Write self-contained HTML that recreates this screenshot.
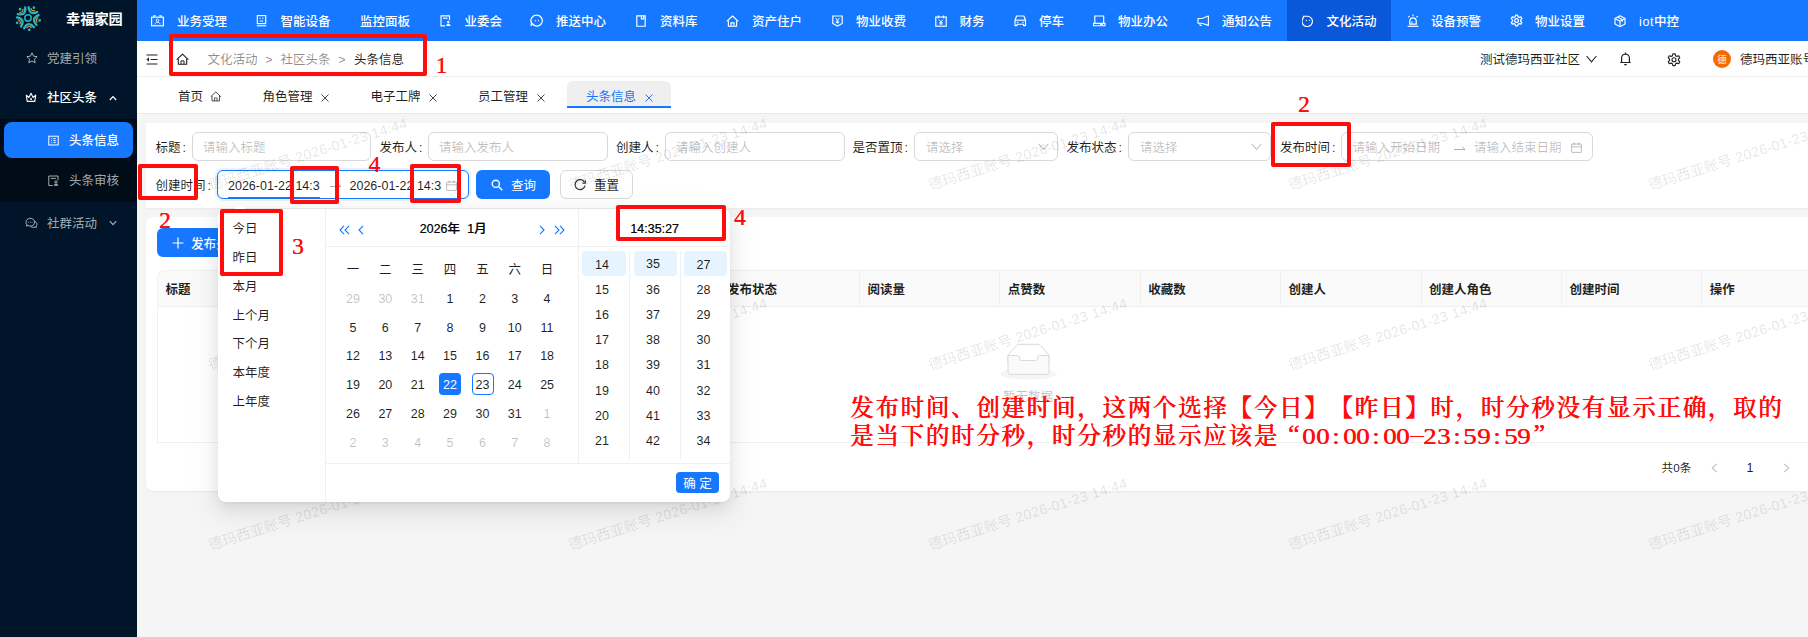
<!DOCTYPE html>
<html lang="zh-CN"><head><meta charset="utf-8"><title>头条信息</title><style>
html,body{margin:0;padding:0}
body{width:1808px;height:637px;overflow:hidden;position:relative;background:#f5f5f5;font-family:"Liberation Sans","Noto Sans CJK SC",sans-serif;font-size:12.5px;color:rgba(0,0,0,.88)}
.b{position:absolute;box-sizing:border-box}
.t{position:absolute;height:20px;line-height:20px;white-space:nowrap}
.c{text-align:center}
.wm{position:absolute;white-space:nowrap;font-size:14.2px;color:rgba(0,0,0,.115);letter-spacing:.28px;transform:rotate(-17.6deg);transform-origin:0 0;height:20px;line-height:20px;pointer-events:none}
.hw{display:inline-block;width:13.420px;text-align:center;letter-spacing:0;font-weight:400;font-size:24px;transform:scaleX(1.12);text-shadow:.45px 0 0 #ff0d0d}
.hy{transform:scale(2.1,.5)}
.ql,.qr{display:inline-block;width:23.600px;letter-spacing:0;font-size:26px;font-weight:400;text-shadow:.45px 0 0 #ff0d0d}
.ql,.qr{position:relative;top:-2px;box-sizing:border-box}
.ql{text-align:right;padding-right:3px}
.qr{text-align:left;padding-left:3px}
.red{color:#ff0d0d;font-family:"Liberation Serif","Noto Serif CJK SC",serif;font-weight:700}
</style></head><body>
<div class="b" style="left:137px;top:0px;width:1671px;height:41px;background:#1677ff"></div>
<div class="b" style="left:137px;top:41px;width:1671px;height:36px;background:#fff;border-bottom:1px solid #f0f0f0"></div>
<div class="b" style="left:137px;top:77px;width:1671px;height:37px;background:#fff;border-bottom:1px solid #e8e8e8"></div>
<div class="b" style="left:146px;top:123px;width:1684px;height:85px;background:#fff;border-radius:0;box-shadow:0 1px 2px rgba(0,0,0,.05)"></div>
<div class="b" style="left:146px;top:217px;width:1684px;height:274px;background:#fff;border-radius:7px;box-shadow:0 1px 2px rgba(0,0,0,.05)"></div>
<div class="b" style="left:0px;top:0px;width:137px;height:637px;background:#001529"></div>
<div class="b" style="left:0px;top:119px;width:137px;height:83px;background:#000c17"></div>
<div class="b" style="left:4px;top:122px;width:129px;height:35.5px;background:#1677ff;border-radius:8px"></div>
<svg class="b" style="left:14.9px;top:5.3px;" width="26" height="26" viewBox="0 0 26 26"><path d="M23.63 10.15 Q15.54 13.54 21.55 19.92" fill="none" stroke="#2bb3bf" stroke-width="2.25" stroke-linecap="round"/><path d="M23.00 12.83 Q20.24 14.54 22.06 17.23" fill="none" stroke="#e9a825" stroke-width="1.1" stroke-linecap="round"/><circle cx="24.64" cy="15.47" r="1.35" fill="#2bb3bf"/><path d="M18.99 22.23 Q13.27 15.59 9.06 23.27" fill="none" stroke="#2bb3bf" stroke-width="2.25" stroke-linecap="round"/><path d="M16.26 22.46 Q13.77 20.36 11.78 22.93" fill="none" stroke="#e9a825" stroke-width="1.1" stroke-linecap="round"/><circle cx="14.24" cy="24.83" r="1.35" fill="#2bb3bf"/><path d="M6.08 21.55 Q10.62 14.06 2.02 12.42" fill="none" stroke="#2bb3bf" stroke-width="2.25" stroke-linecap="round"/><path d="M5.01 19.02 Q6.24 16.01 3.18 14.91" fill="none" stroke="#e9a825" stroke-width="1.1" stroke-linecap="round"/><circle cx="2.13" cy="17.84" r="1.35" fill="#2bb3bf"/><path d="M2.73 9.06 Q11.26 11.07 10.15 2.37" fill="none" stroke="#2bb3bf" stroke-width="2.25" stroke-linecap="round"/><path d="M4.81 7.26 Q8.05 7.50 8.15 4.25" fill="none" stroke="#e9a825" stroke-width="1.1" stroke-linecap="round"/><circle cx="5.04" cy="4.16" r="1.35" fill="#2bb3bf"/><path d="M13.58 2.02 Q14.30 10.75 22.23 7.01" fill="none" stroke="#2bb3bf" stroke-width="2.25" stroke-linecap="round"/><path d="M15.92 3.44 Q16.70 6.59 19.82 5.69" fill="none" stroke="#e9a825" stroke-width="1.1" stroke-linecap="round"/><circle cx="18.95" cy="2.69" r="1.35" fill="#2bb3bf"/><circle cx="13" cy="13" r="3.2" fill="none" stroke="#2bb3bf" stroke-width="1.5"/></svg>
<div class="t" style="left:66px;top:9px;font-size:14.2px;color:#fff;font-weight:700;">幸福家园</div>
<svg class="b" style="left:25.5px;top:52px;" width="12" height="12" viewBox="0 0 12 12"><path d="M6 .9l1.55 3.3 3.55.45-2.6 2.5.65 3.6L6 9l-3.15 1.75.65-3.6L.9 4.65l3.55-.45z" fill="none" stroke="rgba(255,255,255,.65)" stroke-width="1" stroke-linejoin="round"/></svg>
<div class="t" style="left:47px;top:49px;font-size:12.5px;color:rgba(255,255,255,.65);font-weight:400;">党建引领</div>
<svg class="b" style="left:25px;top:91px;" width="12" height="12" viewBox="0 0 12 12"><path d="M1.3 4.2l2.6 2.3L6 2.2l2.1 4.3 2.6-2.3-.9 6.2H2.2z" fill="none" stroke="#fff" stroke-width="1.1" stroke-linejoin="round"/><circle cx="6" cy="8" r="1" fill="#fff"/></svg>
<div class="t" style="left:47px;top:88px;font-size:12.5px;color:#fff;font-weight:500;">社区头条</div>
<svg class="b" style="left:108.5px;top:94.5px;" width="8" height="6" viewBox="0 0 8 6"><path d="M.8 5L4 1.6 7.2 5" fill="none" stroke="#fff" stroke-width="1.2"/></svg>
<svg class="b" style="left:48px;top:134.5px;" width="11" height="11" viewBox="0 0 11 11"><rect x=".8" y="1.2" width="9.4" height="8.8" fill="none" stroke="#fff" stroke-width="1"/><path d="M3.2 3.6h1M3.2 5.6h1M3.2 7.6h1M5.3 3.6h2.5M5.3 5.6h2.5M5.3 7.6h2.5" stroke="#fff" stroke-width=".9"/></svg>
<div class="t" style="left:69px;top:131px;font-size:12.5px;color:#fff;font-weight:500;">头条信息</div>
<svg class="b" style="left:48px;top:174.5px;" width="11" height="11" viewBox="0 0 11 11"><path d="M10 5.2V1H.8v9.6h4" fill="none" stroke="rgba(255,255,255,.65)" stroke-width="1"/><path d="M2.8 3.4h5" stroke="rgba(255,255,255,.65)" stroke-width="1"/><circle cx="8" cy="7" r="1.2" fill="none" stroke="rgba(255,255,255,.65)" stroke-width=".9"/><path d="M5.8 10.8c.2-1.6 1.2-2 2.2-2s2 .4 2.2 2z" fill="rgba(255,255,255,.65)"/></svg>
<div class="t" style="left:69px;top:171px;font-size:12.5px;color:rgba(255,255,255,.65);font-weight:400;">头条审核</div>
<svg class="b" style="left:25px;top:216.5px;" width="13" height="12" viewBox="0 0 13 12"><path d="M1 5.2a4.3 3.9 0 1 1 2 3.3L1.4 9l.4-1.5A3.8 3.8 0 0 1 1 5.2z" fill="none" stroke="rgba(255,255,255,.65)" stroke-width="1"/><path d="M9.6 4.4c1.6.5 2.6 1.8 2.3 3.3-.1.6-.4 1.1-.8 1.5l.3 1.3-1.4-.5c-1.400.6-3.100.4-4.200-.5" fill="none" stroke="rgba(255,255,255,.65)" stroke-width="1"/><path d="M3.2 5.2h.9M4.9 5.200h.9M6.600 5.200h.9" stroke="rgba(255,255,255,.65)" stroke-width=".9"/></svg>
<div class="t" style="left:47px;top:214px;font-size:12.5px;color:rgba(255,255,255,.65);font-weight:400;">社群活动</div>
<svg class="b" style="left:108.5px;top:219.5px;" width="8" height="6" viewBox="0 0 8 6"><path d="M.8 1.2L4 4.600 7.200 1.200" fill="none" stroke="rgba(255,255,255,.65)" stroke-width="1.2"/></svg>
<div class="b" style="left:1287px;top:0px;width:104px;height:41px;background:#0958d9"></div>
<div class="t" style="left:177px;top:12px;font-size:12.5px;color:#fff;font-weight:500;">业务受理</div>
<svg class="b" style="left:151px;top:15.0px;" width="13" height="12" viewBox="0 0 13 12"><rect x=".6" y="2.200" width="11.8" height="8.600" fill="none" stroke="#fff" stroke-width="1.15"/><path d="M2.800 2V.8h2M8.200 .8h2V2" fill="none" stroke="#fff" stroke-width="1.15"/><circle cx="6.500" cy="5.400" r="1.300" fill="none" stroke="#fff" stroke-width=".9"/><path d="M4 9.400c.3-1.700 1.400-2.100 2.500-2.100s2.200.4 2.500 2.100" fill="none" stroke="#fff" stroke-width=".9"/></svg>
<div class="t" style="left:280.5px;top:12px;font-size:12.5px;color:#fff;font-weight:500;">智能设备</div>
<svg class="b" style="left:256px;top:15.0px;" width="11" height="12" viewBox="0 0 11 12"><rect x="1.300" y=".6" width="8.400" height="8" fill="none" stroke="#fff" stroke-width="1.15"/><path d="M3.600 3.300h1M6.400 3.300h1M3.800 6h3.400" stroke="#fff" stroke-width="1.15"/><path d="M.8 10.800h9.400" stroke="#fff" stroke-width="1.15"/></svg>
<div class="t" style="left:360px;top:12px;font-size:12.5px;color:#fff;font-weight:500;">监控面板</div>
<div class="t" style="left:464.5px;top:12px;font-size:12.5px;color:#fff;font-weight:500;">业委会</div>
<svg class="b" style="left:440px;top:15.0px;" width="12" height="12" viewBox="0 0 12 12"><path d="M9.500 5V.8H1v10h4" fill="none" stroke="#fff" stroke-width="1.15"/><path d="M3 3.200h4.500" stroke="#fff" stroke-width="1.15"/><circle cx="8.300" cy="7" r="1.200" fill="#fff"/><path d="M6 11c.2-1.700 1.200-2.200 2.300-2.200s2.100.5 2.300 2.200z" fill="#fff"/></svg>
<div class="t" style="left:556px;top:12px;font-size:12.5px;color:#fff;font-weight:500;">推送中心</div>
<svg class="b" style="left:529.7px;top:14.4px;" width="13.2" height="13.2" viewBox="0 0 12.5 12.5"><path d="M6.400 1.100a5.200 5.200 0 1 1-4.300 8.100L.9 11.300l.5-2.700A5.200 5.200 0 0 1 6.400 1.100z" fill="none" stroke="#fff" stroke-width="1.15"/><circle cx="5" cy="6.300" r=".6" fill="#fff"/><circle cx="8" cy="6.300" r=".6" fill="#fff"/></svg>
<div class="t" style="left:660px;top:12px;font-size:12.5px;color:#fff;font-weight:500;">资料库</div>
<svg class="b" style="left:636px;top:15.0px;" width="10" height="12" viewBox="0 0 10 12"><path d="M.8.800h8.400v10.400H.8z" fill="none" stroke="#fff" stroke-width="1.15"/><path d="M5.400.8v3h2.300v-3" fill="none" stroke="#fff" stroke-width="1.15"/></svg>
<div class="t" style="left:752px;top:12px;font-size:12.5px;color:#fff;font-weight:500;">资产住户</div>
<svg class="b" style="left:726px;top:15.0px;" width="13" height="12" viewBox="0 0 13 12"><path d="M.7 6.400L6.500 1l5.800 5.400" fill="none" stroke="#fff" stroke-width="1.15" stroke-linejoin="round"/><path d="M2.400 5.600v5.600h8.200V5.600" fill="none" stroke="#fff" stroke-width="1.15"/><path d="M5 11.200V7.800h3v3.400" fill="none" stroke="#fff" stroke-width="1.15"/></svg>
<div class="t" style="left:856px;top:12px;font-size:12.5px;color:#fff;font-weight:500;">物业收费</div>
<svg class="b" style="left:831.5px;top:15.0px;" width="11" height="12" viewBox="0 0 11 12"><path d="M.8 1h9.400v7.400L5.500 11 .8 8.400z" fill="none" stroke="#fff" stroke-width="1.15"/><path d="M3.600 3l1.900 2.400L7.400 3M5.500 5.400v3.200M3.800 6.200h3.400M3.800 7.600h3.400" fill="none" stroke="#fff" stroke-width=".9"/></svg>
<div class="t" style="left:959.5px;top:12px;font-size:12.5px;color:#fff;font-weight:500;">财务</div>
<svg class="b" style="left:935px;top:15.0px;" width="12" height="12" viewBox="0 0 12 12"><rect x=".8" y="2" width="10.400" height="9.200" fill="none" stroke="#fff" stroke-width="1.15"/><path d="M3.400.6v2.600M8.600.6v2.600" stroke="#fff" stroke-width="1.15"/><path d="M4.100 4.600L6 7l1.900-2.400M6 7v2.800M4.300 7.600h3.400M4.300 8.900h3.400" fill="none" stroke="#fff" stroke-width=".9"/></svg>
<div class="t" style="left:1039px;top:12px;font-size:12.5px;color:#fff;font-weight:500;">停车</div>
<svg class="b" style="left:1014px;top:15.25px;" width="12.5" height="11.5" viewBox="0 0 12.5 11.5"><path d="M1 5.200L2.600 1h7.300l1.600 4.200v5.400H9.600V9.200H2.900v1.400H1z" fill="none" stroke="#fff" stroke-width="1.15" stroke-linejoin="round"/><path d="M1 5.200h10.500" stroke="#fff" stroke-width="1.15"/><path d="M2.800 7.200h1.600M8.100 7.200h1.600" stroke="#fff" stroke-width="1.15"/></svg>
<div class="t" style="left:1118px;top:12px;font-size:12.5px;color:#fff;font-weight:500;">物业办公</div>
<svg class="b" style="left:1093px;top:15.25px;" width="12.5" height="11.5" viewBox="0 0 12.5 11.5"><path d="M1.800 8V1h8.900v7" fill="none" stroke="#fff" stroke-width="1.15"/><path d="M.5 8.300h11.500v2.400H.5z" fill="none" stroke="#fff" stroke-width="1.15"/><path d="M7 9.500h3" stroke="#fff" stroke-width=".9"/></svg>
<div class="t" style="left:1222px;top:12px;font-size:12.5px;color:#fff;font-weight:500;">通知公告</div>
<svg class="b" style="left:1197px;top:15.25px;" width="12.5" height="11.5" viewBox="0 0 12.5 11.5"><path d="M11.400 1v9.400L4.800 8.200H1V3.500h3.800z" fill="none" stroke="#fff" stroke-width="1.15" stroke-linejoin="round"/><path d="M2.600 8.200l.7 2.300h1.500" fill="none" stroke="#fff" stroke-width="1.15"/></svg>
<div class="t" style="left:1326.5px;top:12px;font-size:12.5px;color:#fff;font-weight:500;">文化活动</div>
<svg class="b" style="left:1301.5px;top:15.0px;" width="11.5" height="12" viewBox="0 0 11.5 12"><path d="M1.600 2.600A5.200 5.200 0 1 0 6 1.200H1.400z" fill="none" stroke="#fff" stroke-width="1.15" stroke-linejoin="round"/><circle cx="4.400" cy="5.400" r=".6" fill="#fff"/><circle cx="7.600" cy="5.400" r=".6" fill="#fff"/></svg>
<div class="t" style="left:1431px;top:12px;font-size:12.5px;color:#fff;font-weight:500;">设备预警</div>
<svg class="b" style="left:1406.7px;top:14.4px;" width="12" height="13" viewBox="0 0 11.2 12"><path d="M2.600 9.400V6.600a3 3 0 0 1 6 0v2.800z" fill="none" stroke="#fff" stroke-width="1.15"/><path d="M.6 11.400h10" stroke="#fff" stroke-width="1.15"/><path d="M5.600 .4v1.600M1.300 2l1 1M9.900 2l-1 1" stroke="#fff" stroke-width="1.15"/><path d="M4.600 9V6.800" stroke="#fff" stroke-width=".9"/></svg>
<div class="t" style="left:1535px;top:12px;font-size:12.5px;color:#fff;font-weight:500;">物业设置</div>
<svg class="b" style="left:1509.5px;top:14.3px;" width="13.2" height="13.2" viewBox="0 0 12 11.5"><path d="M5.100 .8h1.800l.4 1.500 1.100.6 1.500-.5.900 1.600-1.100 1.100v1.200l1.100 1.100-.9 1.600-1.500-.5-1.100.6-.4 1.500H5.100l-.4-1.500-1.100-.6-1.500.5-.9-1.600 1.100-1.100V5.100L1.200 4l.9-1.600 1.500.5 1.100-.6z" fill="none" stroke="#fff" stroke-width="1.15" stroke-linejoin="round"/><circle cx="6" cy="5.700" r="1.700" fill="none" stroke="#fff" stroke-width="1.15"/></svg>
<div class="t" style="left:1639px;top:12px;font-size:12.5px;color:#fff;font-weight:500;"><span style="letter-spacing:.6px">iot</span>中控</div>
<svg class="b" style="left:1614px;top:14.8px;" width="12" height="12.4" viewBox="0 0 12 12.4"><path d="M6 .7l5 2.700v5.600L6 11.700 1 9V3.400z" fill="none" stroke="#fff" stroke-width="1.15" stroke-linejoin="round"/><path d="M1 3.400l5 2.800 5-2.800M6 6.200v5.500M3.500 2.050l5 2.800v2" fill="none" stroke="#fff" stroke-width="1.15" stroke-linejoin="round"/></svg>
<svg class="b" style="left:146px;top:53.5px;" width="12" height="11" viewBox="0 0 12 11"><path d="M.5 1h11M4.600 5.500h6.900M.5 10h11" stroke="#222" stroke-width="1.1"/><path d="M3 3.300v4.400L.4 5.500z" fill="#222"/></svg>
<svg class="b" style="left:176px;top:52.5px;" width="13" height="12.5" viewBox="0 0 13 12.5"><path d="M.7 6.600L6.500 1.100l5.800 5.500" fill="none" stroke="#222" stroke-width="1.1" stroke-linejoin="round"/><path d="M2.300 5.700v5.600h8.400V5.700" fill="none" stroke="#222" stroke-width="1.1"/><path d="M5 11.300V7.900h3v3.400" fill="none" stroke="#222" stroke-width="1"/></svg>
<div class="t" style="left:207.5px;top:50px;font-size:12.5px;color:rgba(0,0,0,.45);font-weight:400;">文化活动</div>
<div class="t c" style="left:229px;width:80px;top:50px;font-size:12.5px;color:rgba(0,0,0,.45);font-weight:400;">&gt;</div>
<div class="t" style="left:280.5px;top:50px;font-size:12.5px;color:rgba(0,0,0,.45);font-weight:400;">社区头条</div>
<div class="t c" style="left:302px;width:80px;top:50px;font-size:12.5px;color:rgba(0,0,0,.45);font-weight:400;">&gt;</div>
<div class="t" style="left:354px;top:50px;font-size:12.5px;color:rgba(0,0,0,.88);font-weight:400;">头条信息</div>
<div class="t" style="left:1480px;top:50px;font-size:12.5px;color:rgba(0,0,0,.88);font-weight:400;">测试德玛西亚社区</div>
<svg class="b" style="left:1585.5px;top:55px;" width="11" height="8" viewBox="0 0 11 8"><path d="M.6 1l4.900 5.800L10.400 1" fill="none" stroke="#222" stroke-width="1.1"/></svg>
<svg class="b" style="left:1619px;top:52px;" width="13" height="14" viewBox="0 0 13 14"><path d="M2.600 10.400V6a3.900 3.900 0 0 1 7.800 0v4.400M1.200 10.500h10.600M5.200 12.600h2.600M6.500 .6v1.400" fill="none" stroke="#222" stroke-width="1.200"/></svg>
<svg class="b" style="left:1667px;top:52.5px;" width="14" height="14" viewBox="0 0 14 14"><path d="M5.900 .9h2.200l.5 1.800 1.300.7 1.800-.6 1.100 1.900-1.300 1.300v1.500l1.300 1.300-1.100 1.900-1.800-.6-1.300.7-.5 1.800H5.900l-.5-1.800-1.300-.7-1.800.6-1.100-1.900 1.300-1.300V6L1.200 4.700l1.100-1.900 1.800.6 1.300-.7z" fill="none" stroke="#222" stroke-width="1.150" stroke-linejoin="round"/><circle cx="7" cy="6.750" r="2" fill="none" stroke="#222" stroke-width="1.150"/></svg>
<div class="b" style="left:1713px;top:50px;width:18px;height:18px;background:#f56a00;border-radius:50%"></div>
<div class="t c" style="left:1682px;width:80px;top:50px;font-size:9.5px;color:#fff;font-weight:400;">德</div>
<div class="t" style="left:1740px;top:50px;font-size:12.5px;color:rgba(0,0,0,.88);font-weight:400;">德玛西亚账号</div>
<div class="b" style="left:567px;top:81px;width:104px;height:27px;background:#efefef;border-radius:6px 6px 0 0;border-bottom:2px solid #1677ff"></div>
<div class="t" style="left:178px;top:87px;font-size:12.5px;color:rgba(0,0,0,.88);font-weight:400;">首页</div>
<svg class="b" style="left:210px;top:90.5px;" width="11.5" height="11" viewBox="0 0 13 12.5"><path d="M.7 6.600L6.500 1.100l5.800 5.500" fill="none" stroke="#444" stroke-width="1.1" stroke-linejoin="round"/><path d="M2.300 5.700v5.600h8.400V5.700" fill="none" stroke="#444" stroke-width="1.1"/><path d="M5 11.300V7.900h3v3.400" fill="none" stroke="#444" stroke-width="1"/></svg>
<div class="t" style="left:262.5px;top:87px;font-size:12.5px;color:rgba(0,0,0,.88);font-weight:400;">角色管理</div>
<svg class="b" style="left:320.5px;top:93.5px;" width="8" height="8" viewBox="0 0 8 8"><path d="M.5 .5l7 7M7.500 .5l-7 7" stroke="#444" stroke-width="1"/></svg>
<div class="t" style="left:370.5px;top:87px;font-size:12.5px;color:rgba(0,0,0,.88);font-weight:400;">电子工牌</div>
<svg class="b" style="left:428.5px;top:93.5px;" width="8" height="8" viewBox="0 0 8 8"><path d="M.5 .5l7 7M7.500 .5l-7 7" stroke="#444" stroke-width="1"/></svg>
<div class="t" style="left:478px;top:87px;font-size:12.5px;color:rgba(0,0,0,.88);font-weight:400;">员工管理</div>
<svg class="b" style="left:536.5px;top:93.5px;" width="8" height="8" viewBox="0 0 8 8"><path d="M.5 .5l7 7M7.500 .5l-7 7" stroke="#444" stroke-width="1"/></svg>
<div class="t" style="left:586px;top:87px;font-size:12.5px;color:#1677ff;font-weight:400;">头条信息</div>
<svg class="b" style="left:644.5px;top:93.5px;" width="8" height="8" viewBox="0 0 8 8"><path d="M.5 .5l7 7M7.500 .5l-7 7" stroke="#1677ff" stroke-width="1"/></svg>
<div class="t" style="left:155.5px;top:137.6px;font-size:12.5px;color:rgba(0,0,0,.88);font-weight:400;">标题<span style="margin-left:2px">:</span></div>
<div class="b" style="left:192px;top:132px;width:179px;height:29px;background:#fff;border:1px solid #d9d9d9;border-radius:6px;"></div>
<div class="t" style="left:203px;top:137.6px;font-size:12.5px;color:rgba(0,0,0,.25);font-weight:400;">请输入标题</div>
<div class="t" style="left:379.5px;top:137.6px;font-size:12.5px;color:rgba(0,0,0,.88);font-weight:400;">发布人<span style="margin-left:2px">:</span></div>
<div class="b" style="left:428px;top:132px;width:179.5px;height:29px;background:#fff;border:1px solid #d9d9d9;border-radius:6px;"></div>
<div class="t" style="left:439px;top:137.6px;font-size:12.5px;color:rgba(0,0,0,.25);font-weight:400;">请输入发布人</div>
<div class="t" style="left:616px;top:137.6px;font-size:12.5px;color:rgba(0,0,0,.88);font-weight:400;">创建人<span style="margin-left:2px">:</span></div>
<div class="b" style="left:665px;top:132px;width:179.5px;height:29px;background:#fff;border:1px solid #d9d9d9;border-radius:6px;"></div>
<div class="t" style="left:676px;top:137.6px;font-size:12.5px;color:rgba(0,0,0,.25);font-weight:400;">请输入创建人</div>
<div class="t" style="left:852.5px;top:137.6px;font-size:12.5px;color:rgba(0,0,0,.88);font-weight:400;">是否置顶<span style="margin-left:2px">:</span></div>
<div class="b" style="left:914px;top:132px;width:143.5px;height:29px;background:#fff;border:1px solid #d9d9d9;border-radius:6px;"></div>
<div class="t" style="left:926px;top:137.6px;font-size:12.5px;color:rgba(0,0,0,.25);font-weight:400;">请选择</div>
<svg class="b" style="left:1037.5px;top:143px;" width="11" height="8" viewBox="0 0 11 8"><path d="M.6 .8l4.900 5.600L10.400 .8" fill="none" stroke="rgba(0,0,0,.32)" stroke-width="1"/></svg>
<div class="t" style="left:1066.5px;top:137.6px;font-size:12.5px;color:rgba(0,0,0,.88);font-weight:400;">发布状态<span style="margin-left:2px">:</span></div>
<div class="b" style="left:1128px;top:132px;width:142.5px;height:29px;background:#fff;border:1px solid #d9d9d9;border-radius:6px;"></div>
<div class="t" style="left:1140px;top:137.6px;font-size:12.5px;color:rgba(0,0,0,.25);font-weight:400;">请选择</div>
<svg class="b" style="left:1250.5px;top:143px;" width="11" height="8" viewBox="0 0 11 8"><path d="M.6 .8l4.900 5.600L10.400 .8" fill="none" stroke="rgba(0,0,0,.32)" stroke-width="1"/></svg>
<div class="t" style="left:1280px;top:137.6px;font-size:12.5px;color:rgba(0,0,0,.88);font-weight:400;">发布时间<span style="margin-left:2px">:</span></div>
<div class="b" style="left:1341px;top:132px;width:252px;height:29px;background:#fff;border:1px solid #d9d9d9;border-radius:6px;"></div>
<div class="t" style="left:1352.5px;top:137.6px;font-size:12.5px;color:rgba(0,0,0,.25);font-weight:400;">请输入开始日期</div>
<svg class="b" style="left:1453.5px;top:144.5px;" width="12" height="7" viewBox="0 0 12 7"><path d="M0 4.500h11M7.800 1.500l3.200 3" fill="none" stroke="rgba(0,0,0,.3)" stroke-width="1"/></svg>
<div class="t" style="left:1474px;top:137.6px;font-size:12.5px;color:rgba(0,0,0,.25);font-weight:400;">请输入结束日期</div>
<svg class="b" style="left:1571px;top:142.0px;" width="11" height="11" viewBox="0 0 11 11"><rect x=".6" y="2" width="9.800" height="8.400" rx=".6" fill="none" stroke="rgba(0,0,0,.25)" stroke-width="1"/><path d="M.6 4.800h9.800M3.200 .600v2.400M7.800 .600v2.400" stroke="rgba(0,0,0,.25)" stroke-width="1"/></svg>
<div class="t" style="left:155.5px;top:176px;font-size:12.5px;color:rgba(0,0,0,.88);font-weight:400;">创建时间<span style="margin-left:2px">:</span></div>
<div class="b" style="left:217px;top:170px;width:252px;height:29px;background:#fff;border:1px solid #1677ff;border-radius:6px;box-shadow:0 0 0 2px rgba(5,145,255,.1)"></div>
<div class="b" style="left:228px;top:176px;width:92px;height:20px;overflow:hidden"><div class="t" style="left:0;top:0;font-size:12.5px">2026-01-22 14:35:27</div></div>
<div class="b" style="left:228px;top:197px;width:92px;height:2px;background:#1677ff"></div>
<svg class="b" style="left:329.5px;top:182px;" width="12" height="7" viewBox="0 0 12 7"><path d="M0 4.500h11M7.800 1.500l3.200 3" fill="none" stroke="rgba(0,0,0,.3)" stroke-width="1"/></svg>
<div class="b" style="left:349.5px;top:176px;width:92px;height:20px;overflow:hidden"><div class="t" style="left:0;top:0;font-size:12.5px">2026-01-22 14:35:27</div></div>
<svg class="b" style="left:446px;top:179.5px;" width="11" height="11" viewBox="0 0 11 11"><rect x=".6" y="2" width="9.800" height="8.400" rx=".6" fill="none" stroke="rgba(0,0,0,.25)" stroke-width="1"/><path d="M.6 4.800h9.800M3.200 .600v2.400M7.800 .600v2.400" stroke="rgba(0,0,0,.25)" stroke-width="1"/></svg>
<div class="b" style="left:476px;top:170px;width:74px;height:29px;background:#1677ff;border-radius:6px"></div>
<svg class="b" style="left:491px;top:179px;" width="12" height="12" viewBox="0 0 12 12"><circle cx="4.800" cy="4.800" r="3.600" fill="none" stroke="#fff" stroke-width="1.400"/><path d="M7.500 7.500l3.800 3.800" stroke="#fff" stroke-width="1.500"/></svg>
<div class="t" style="left:511px;top:176px;font-size:12.5px;color:#fff;font-weight:400;">查询</div>
<div class="b" style="left:559.5px;top:170px;width:73.0px;height:29px;background:#fff;border:1px solid #d9d9d9;border-radius:6px"></div>
<svg class="b" style="left:574px;top:179px;" width="12" height="12" viewBox="0 0 12 12"><path d="M10.600 3.400A5 5 0 1 0 11 6.600" fill="none" stroke="#333" stroke-width="1.200"/><path d="M11.300 1.200v2.900H8.400" fill="none" stroke="#333" stroke-width="1.100"/></svg>
<div class="t" style="left:594px;top:176px;font-size:12.5px;color:rgba(0,0,0,.88);font-weight:400;">重置</div>
<div class="b" style="left:157px;top:228px;width:105px;height:29px;background:#1677ff;border-radius:6px"></div>
<svg class="b" style="left:172px;top:236.5px;" width="12" height="12" viewBox="0 0 12 12"><path d="M6 .5v11M.5 6h11" stroke="#fff" stroke-width="1.200"/></svg>
<div class="t" style="left:191px;top:233.5px;font-size:12.6px;color:#fff;font-weight:500;">发布头条</div>
<div class="b" style="left:157px;top:270px;width:1693px;height:37px;background:#fafafa;border:1px solid #f0f0f0;border-radius:8px 0 0 0"></div>
<div class="b" style="left:157px;top:306px;width:1693px;height:137px;border-left:1px solid #f0f0f0;border-bottom:1px solid #f0f0f0"></div>
<div class="t" style="left:165.4px;top:280px;font-size:12.5px;color:rgba(0,0,0,.88);font-weight:700;">标题</div>
<div class="b" style="left:297.4px;top:270px;width:1.0px;height:37px;background:#f0f0f0"></div>
<div class="t" style="left:305.79999999999995px;top:280px;font-size:12.5px;color:rgba(0,0,0,.88);font-weight:700;">发布人</div>
<div class="b" style="left:437.8px;top:270px;width:1.0px;height:37px;background:#f0f0f0"></div>
<div class="t" style="left:446.2px;top:280px;font-size:12.5px;color:rgba(0,0,0,.88);font-weight:700;">发布时间</div>
<div class="b" style="left:578.2px;top:270px;width:1.0px;height:37px;background:#f0f0f0"></div>
<div class="t" style="left:586.6px;top:280px;font-size:12.5px;color:rgba(0,0,0,.88);font-weight:700;">是否置顶</div>
<div class="b" style="left:718.6px;top:270px;width:1.0px;height:37px;background:#f0f0f0"></div>
<div class="t" style="left:727.0px;top:280px;font-size:12.5px;color:rgba(0,0,0,.88);font-weight:700;">发布状态</div>
<div class="b" style="left:859.0px;top:270px;width:1.0px;height:37px;background:#f0f0f0"></div>
<div class="t" style="left:867.4px;top:280px;font-size:12.5px;color:rgba(0,0,0,.88);font-weight:700;">阅读量</div>
<div class="b" style="left:999.4000000000001px;top:270px;width:1.0px;height:37px;background:#f0f0f0"></div>
<div class="t" style="left:1007.8000000000001px;top:280px;font-size:12.5px;color:rgba(0,0,0,.88);font-weight:700;">点赞数</div>
<div class="b" style="left:1139.8000000000002px;top:270px;width:1.0px;height:37px;background:#f0f0f0"></div>
<div class="t" style="left:1148.2000000000003px;top:280px;font-size:12.5px;color:rgba(0,0,0,.88);font-weight:700;">收藏数</div>
<div class="b" style="left:1280.2px;top:270px;width:1.0px;height:37px;background:#f0f0f0"></div>
<div class="t" style="left:1288.6000000000001px;top:280px;font-size:12.5px;color:rgba(0,0,0,.88);font-weight:700;">创建人</div>
<div class="b" style="left:1420.6000000000001px;top:270px;width:1.0px;height:37px;background:#f0f0f0"></div>
<div class="t" style="left:1429.0000000000002px;top:280px;font-size:12.5px;color:rgba(0,0,0,.88);font-weight:700;">创建人角色</div>
<div class="b" style="left:1561.0px;top:270px;width:1.0px;height:37px;background:#f0f0f0"></div>
<div class="t" style="left:1569.4px;top:280px;font-size:12.5px;color:rgba(0,0,0,.88);font-weight:700;">创建时间</div>
<div class="b" style="left:1701.4px;top:270px;width:1.0px;height:37px;background:#f0f0f0"></div>
<div class="t" style="left:1709.8000000000002px;top:280px;font-size:12.5px;color:rgba(0,0,0,.88);font-weight:700;">操作</div>
<svg class="b" style="left:1000px;top:342.5px;" width="57" height="37" viewBox="0 0 57 37"><ellipse cx="28.500" cy="31" rx="28.500" ry="5.500" fill="#f5f5f5"/><path d="M49 12.200L40.300 2.400C39.900 1.700 39.300 1.300 38.600 1.300H18.400c-.7 0-1.300.4-1.700 1.100L8 12.200v7.900h41z" fill="none" stroke="#d9d9d9" stroke-width="1"/><path d="M37.500 15c0-1.400.9-2.500 1.900-2.500H49v15.500c0 1.800-1.100 3.300-2.400 3.300H10.400C9.100 31.300 8 29.800 8 28V12.500h9.600c1 0 1.900 1.100 1.900 2.500 0 1.400.9 2.500 1.900 2.500h14.200c1 0 1.900-1.100 1.900-2.500z" fill="#fafafa" stroke="#d9d9d9" stroke-width="1"/></svg>
<div class="t" style="left:1003px;top:387px;font-size:12.5px;color:rgba(0,0,0,.25);font-weight:400;">暂无数据</div>
<div class="t" style="left:1661.6px;top:458px;font-size:11.6px;color:rgba(0,0,0,.88);font-weight:400;">共0条</div>
<svg class="b" style="left:1711px;top:462.5px;" width="7" height="10" viewBox="0 0 7 10"><path d="M5.800 .8L1.200 5l4.600 4.200" fill="none" stroke="rgba(0,0,0,.25)" stroke-width="1.100"/></svg>
<div class="t c" style="left:1710px;width:80px;top:458px;font-size:12.5px;color:rgba(0,0,0,.88);font-weight:400;">1</div>
<svg class="b" style="left:1783px;top:462.5px;" width="7" height="10" viewBox="0 0 7 10"><path d="M1.200 .8L5.800 5 1.200 9.200" fill="none" stroke="rgba(0,0,0,.25)" stroke-width="1.100"/></svg>
<div class="wm" style="left:206px;top:175.8px">德玛西亚账号 2026-01-23 14:44</div>
<div class="wm" style="left:566px;top:175.8px">德玛西亚账号 2026-01-23 14:44</div>
<div class="wm" style="left:926px;top:175.8px">德玛西亚账号 2026-01-23 14:44</div>
<div class="wm" style="left:1286px;top:175.8px">德玛西亚账号 2026-01-23 14:44</div>
<div class="wm" style="left:1646px;top:175.8px">德玛西亚账号 2026-01-23 14:44</div>
<div class="wm" style="left:206px;top:355.8px">德玛西亚账号 2026-01-23 14:44</div>
<div class="wm" style="left:566px;top:355.8px">德玛西亚账号 2026-01-23 14:44</div>
<div class="wm" style="left:926px;top:355.8px">德玛西亚账号 2026-01-23 14:44</div>
<div class="wm" style="left:1286px;top:355.8px">德玛西亚账号 2026-01-23 14:44</div>
<div class="wm" style="left:1646px;top:355.8px">德玛西亚账号 2026-01-23 14:44</div>
<div class="wm" style="left:206px;top:535.8px">德玛西亚账号 2026-01-23 14:44</div>
<div class="wm" style="left:566px;top:535.8px">德玛西亚账号 2026-01-23 14:44</div>
<div class="wm" style="left:926px;top:535.8px">德玛西亚账号 2026-01-23 14:44</div>
<div class="wm" style="left:1286px;top:535.8px">德玛西亚账号 2026-01-23 14:44</div>
<div class="wm" style="left:1646px;top:535.8px">德玛西亚账号 2026-01-23 14:44</div>
<div class="b" style="left:218px;top:209px;width:512px;height:293px;background:#fff;border-radius:8px;box-shadow:0 6px 16px 0 rgba(0,0,0,.08),0 3px 6px -4px rgba(0,0,0,.12),0 9px 28px 8px rgba(0,0,0,.05)"></div>
<svg class="b" style="left:233px;top:204.5px;" width="14" height="5" viewBox="0 0 14 5"><path d="M0 5L5.500 .800Q7 -.200 8.500 .800L14 5z" fill="#fff"/></svg>
<div class="b" style="left:325px;top:209px;width:1px;height:293px;background:#f0f0f0"></div>
<div class="b" style="left:326px;top:246px;width:404px;height:1px;background:#f0f0f0"></div>
<div class="b" style="left:578px;top:209px;width:1px;height:254px;background:#f0f0f0"></div>
<div class="b" style="left:326px;top:463px;width:404px;height:1px;background:#f0f0f0"></div>
<div class="t" style="left:232.4px;top:219px;font-size:12.5px;color:rgba(0,0,0,.88);font-weight:400;">今日</div>
<div class="t" style="left:232.4px;top:248px;font-size:12.5px;color:rgba(0,0,0,.88);font-weight:400;">昨日</div>
<div class="t" style="left:232.4px;top:277px;font-size:12.5px;color:rgba(0,0,0,.88);font-weight:400;">本月</div>
<div class="t" style="left:232.4px;top:305.5px;font-size:12.5px;color:rgba(0,0,0,.88);font-weight:400;">上个月</div>
<div class="t" style="left:232.4px;top:334px;font-size:12.5px;color:rgba(0,0,0,.88);font-weight:400;">下个月</div>
<div class="t" style="left:232.4px;top:362.5px;font-size:12.5px;color:rgba(0,0,0,.88);font-weight:400;">本年度</div>
<div class="t" style="left:232.4px;top:392px;font-size:12.5px;color:rgba(0,0,0,.88);font-weight:400;">上年度</div>
<svg class="b" style="left:339px;top:225.2px;" width="11" height="10" viewBox="0 0 11 10"><path d="M5 .8L1 5l4 4.200" fill="none" stroke="#1677ff" stroke-width="1.100"/><path d="M10 .8L6 5l4 4.200" fill="none" stroke="#1677ff" stroke-width="1.100"/></svg>
<svg class="b" style="left:358px;top:225.2px;" width="6" height="10" viewBox="0 0 6 10"><path d="M5 .8L1 5l4 4.200" fill="none" stroke="#1677ff" stroke-width="1.100"/></svg>
<svg class="b" style="left:539px;top:225.2px;" width="6" height="10" viewBox="0 0 6 10"><path d="M1 .8L5 5 1 9.200" fill="none" stroke="#1677ff" stroke-width="1.100"/></svg>
<svg class="b" style="left:554px;top:225.2px;" width="11" height="10" viewBox="0 0 11 10"><path d="M1 .8L5 5 1 9.200" fill="none" stroke="#1677ff" stroke-width="1.100"/><path d="M6 .8L10 5 6 9.200" fill="none" stroke="#1677ff" stroke-width="1.100"/></svg>
<div class="t" style="left:419.5px;top:219.2px;font-size:12.5px;color:rgba(0,0,0,.88);font-weight:500;text-shadow:.4px 0 0 rgba(0,0,0,.75)">2026年</div>
<div class="t" style="left:467px;top:219.2px;font-size:12.5px;color:rgba(0,0,0,.88);font-weight:500;text-shadow:.4px 0 0 rgba(0,0,0,.75)">1月</div>
<div class="t c" style="left:313.0px;width:80px;top:259.6px;font-size:12.5px;color:rgba(0,0,0,.88);font-weight:400;">一</div>
<div class="t c" style="left:345.35px;width:80px;top:259.6px;font-size:12.5px;color:rgba(0,0,0,.88);font-weight:400;">二</div>
<div class="t c" style="left:377.7px;width:80px;top:259.6px;font-size:12.5px;color:rgba(0,0,0,.88);font-weight:400;">三</div>
<div class="t c" style="left:410.05px;width:80px;top:259.6px;font-size:12.5px;color:rgba(0,0,0,.88);font-weight:400;">四</div>
<div class="t c" style="left:442.4px;width:80px;top:259.6px;font-size:12.5px;color:rgba(0,0,0,.88);font-weight:400;">五</div>
<div class="t c" style="left:474.75px;width:80px;top:259.6px;font-size:12.5px;color:rgba(0,0,0,.88);font-weight:400;">六</div>
<div class="t c" style="left:507.1px;width:80px;top:259.6px;font-size:12.5px;color:rgba(0,0,0,.88);font-weight:400;">日</div>
<div class="b" style="left:439px;top:373px;width:22px;height:22px;background:#1677ff;border-radius:4px"></div>
<div class="b" style="left:472px;top:373px;width:21.5px;height:22px;border:1px solid #1677ff;border-radius:4px"></div>
<div class="t c" style="left:313.0px;width:80px;top:288.75px;font-size:12.5px;color:rgba(0,0,0,.25);font-weight:400;">29</div>
<div class="t c" style="left:345.35px;width:80px;top:288.75px;font-size:12.5px;color:rgba(0,0,0,.25);font-weight:400;">30</div>
<div class="t c" style="left:377.7px;width:80px;top:288.75px;font-size:12.5px;color:rgba(0,0,0,.25);font-weight:400;">31</div>
<div class="t c" style="left:410.05px;width:80px;top:288.75px;font-size:12.5px;color:rgba(0,0,0,.88);font-weight:400;">1</div>
<div class="t c" style="left:442.4px;width:80px;top:288.75px;font-size:12.5px;color:rgba(0,0,0,.88);font-weight:400;">2</div>
<div class="t c" style="left:474.75px;width:80px;top:288.75px;font-size:12.5px;color:rgba(0,0,0,.88);font-weight:400;">3</div>
<div class="t c" style="left:507.1px;width:80px;top:288.75px;font-size:12.5px;color:rgba(0,0,0,.88);font-weight:400;">4</div>
<div class="t c" style="left:313.0px;width:80px;top:317.5px;font-size:12.5px;color:rgba(0,0,0,.88);font-weight:400;">5</div>
<div class="t c" style="left:345.35px;width:80px;top:317.5px;font-size:12.5px;color:rgba(0,0,0,.88);font-weight:400;">6</div>
<div class="t c" style="left:377.7px;width:80px;top:317.5px;font-size:12.5px;color:rgba(0,0,0,.88);font-weight:400;">7</div>
<div class="t c" style="left:410.05px;width:80px;top:317.5px;font-size:12.5px;color:rgba(0,0,0,.88);font-weight:400;">8</div>
<div class="t c" style="left:442.4px;width:80px;top:317.5px;font-size:12.5px;color:rgba(0,0,0,.88);font-weight:400;">9</div>
<div class="t c" style="left:474.75px;width:80px;top:317.5px;font-size:12.5px;color:rgba(0,0,0,.88);font-weight:400;">10</div>
<div class="t c" style="left:507.1px;width:80px;top:317.5px;font-size:12.5px;color:rgba(0,0,0,.88);font-weight:400;">11</div>
<div class="t c" style="left:313.0px;width:80px;top:345.8px;font-size:12.5px;color:rgba(0,0,0,.88);font-weight:400;">12</div>
<div class="t c" style="left:345.35px;width:80px;top:345.8px;font-size:12.5px;color:rgba(0,0,0,.88);font-weight:400;">13</div>
<div class="t c" style="left:377.7px;width:80px;top:345.8px;font-size:12.5px;color:rgba(0,0,0,.88);font-weight:400;">14</div>
<div class="t c" style="left:410.05px;width:80px;top:345.8px;font-size:12.5px;color:rgba(0,0,0,.88);font-weight:400;">15</div>
<div class="t c" style="left:442.4px;width:80px;top:345.8px;font-size:12.5px;color:rgba(0,0,0,.88);font-weight:400;">16</div>
<div class="t c" style="left:474.75px;width:80px;top:345.8px;font-size:12.5px;color:rgba(0,0,0,.88);font-weight:400;">17</div>
<div class="t c" style="left:507.1px;width:80px;top:345.8px;font-size:12.5px;color:rgba(0,0,0,.88);font-weight:400;">18</div>
<div class="t c" style="left:313.0px;width:80px;top:375.25px;font-size:12.5px;color:rgba(0,0,0,.88);font-weight:400;">19</div>
<div class="t c" style="left:345.35px;width:80px;top:375.25px;font-size:12.5px;color:rgba(0,0,0,.88);font-weight:400;">20</div>
<div class="t c" style="left:377.7px;width:80px;top:375.25px;font-size:12.5px;color:rgba(0,0,0,.88);font-weight:400;">21</div>
<div class="t c" style="left:410.05px;width:80px;top:375.25px;font-size:12.5px;color:#fff;font-weight:400;">22</div>
<div class="t c" style="left:442.4px;width:80px;top:375.25px;font-size:12.5px;color:rgba(0,0,0,.88);font-weight:400;">23</div>
<div class="t c" style="left:474.75px;width:80px;top:375.25px;font-size:12.5px;color:rgba(0,0,0,.88);font-weight:400;">24</div>
<div class="t c" style="left:507.1px;width:80px;top:375.25px;font-size:12.5px;color:rgba(0,0,0,.88);font-weight:400;">25</div>
<div class="t c" style="left:313.0px;width:80px;top:404px;font-size:12.5px;color:rgba(0,0,0,.88);font-weight:400;">26</div>
<div class="t c" style="left:345.35px;width:80px;top:404px;font-size:12.5px;color:rgba(0,0,0,.88);font-weight:400;">27</div>
<div class="t c" style="left:377.7px;width:80px;top:404px;font-size:12.5px;color:rgba(0,0,0,.88);font-weight:400;">28</div>
<div class="t c" style="left:410.05px;width:80px;top:404px;font-size:12.5px;color:rgba(0,0,0,.88);font-weight:400;">29</div>
<div class="t c" style="left:442.4px;width:80px;top:404px;font-size:12.5px;color:rgba(0,0,0,.88);font-weight:400;">30</div>
<div class="t c" style="left:474.75px;width:80px;top:404px;font-size:12.5px;color:rgba(0,0,0,.88);font-weight:400;">31</div>
<div class="t c" style="left:507.1px;width:80px;top:404px;font-size:12.5px;color:rgba(0,0,0,.25);font-weight:400;">1</div>
<div class="t c" style="left:313.0px;width:80px;top:432.5px;font-size:12.5px;color:rgba(0,0,0,.25);font-weight:400;">2</div>
<div class="t c" style="left:345.35px;width:80px;top:432.5px;font-size:12.5px;color:rgba(0,0,0,.25);font-weight:400;">3</div>
<div class="t c" style="left:377.7px;width:80px;top:432.5px;font-size:12.5px;color:rgba(0,0,0,.25);font-weight:400;">4</div>
<div class="t c" style="left:410.05px;width:80px;top:432.5px;font-size:12.5px;color:rgba(0,0,0,.25);font-weight:400;">5</div>
<div class="t c" style="left:442.4px;width:80px;top:432.5px;font-size:12.5px;color:rgba(0,0,0,.25);font-weight:400;">6</div>
<div class="t c" style="left:474.75px;width:80px;top:432.5px;font-size:12.5px;color:rgba(0,0,0,.25);font-weight:400;">7</div>
<div class="t c" style="left:507.1px;width:80px;top:432.5px;font-size:12.5px;color:rgba(0,0,0,.25);font-weight:400;">8</div>
<div class="t c" style="left:614.5px;width:80px;top:219.2px;font-size:12.5px;color:rgba(0,0,0,.88);font-weight:500;text-shadow:.4px 0 0 rgba(0,0,0,.75)">14:35:27</div>
<div class="b" style="left:629px;top:251px;width:1px;height:209px;background:#f0f0f0"></div>
<div class="b" style="left:680px;top:251px;width:1px;height:209px;background:#f0f0f0"></div>
<div class="b" style="left:582px;top:251px;width:44px;height:24.5px;background:#e6f4ff;border-radius:4px"></div>
<div class="b" style="left:634px;top:251px;width:43px;height:24.5px;background:#e6f4ff;border-radius:4px"></div>
<div class="b" style="left:684px;top:251px;width:43px;height:24.5px;background:#e6f4ff;border-radius:4px"></div>
<div class="t c" style="left:562px;width:80px;top:254.60000000000002px;font-size:12.5px;color:rgba(0,0,0,.88);font-weight:400;">14</div>
<div class="t c" style="left:613px;width:80px;top:253.60000000000002px;font-size:12.5px;color:rgba(0,0,0,.88);font-weight:400;">35</div>
<div class="t c" style="left:663.5px;width:80px;top:254.60000000000002px;font-size:12.5px;color:rgba(0,0,0,.88);font-weight:400;">27</div>
<div class="t c" style="left:562px;width:80px;top:279.8px;font-size:12.5px;color:rgba(0,0,0,.88);font-weight:400;">15</div>
<div class="t c" style="left:613px;width:80px;top:279.8px;font-size:12.5px;color:rgba(0,0,0,.88);font-weight:400;">36</div>
<div class="t c" style="left:663.5px;width:80px;top:279.8px;font-size:12.5px;color:rgba(0,0,0,.88);font-weight:400;">28</div>
<div class="t c" style="left:562px;width:80px;top:305.0px;font-size:12.5px;color:rgba(0,0,0,.88);font-weight:400;">16</div>
<div class="t c" style="left:613px;width:80px;top:305.0px;font-size:12.5px;color:rgba(0,0,0,.88);font-weight:400;">37</div>
<div class="t c" style="left:663.5px;width:80px;top:305.0px;font-size:12.5px;color:rgba(0,0,0,.88);font-weight:400;">29</div>
<div class="t c" style="left:562px;width:80px;top:330.20000000000005px;font-size:12.5px;color:rgba(0,0,0,.88);font-weight:400;">17</div>
<div class="t c" style="left:613px;width:80px;top:330.20000000000005px;font-size:12.5px;color:rgba(0,0,0,.88);font-weight:400;">38</div>
<div class="t c" style="left:663.5px;width:80px;top:330.20000000000005px;font-size:12.5px;color:rgba(0,0,0,.88);font-weight:400;">30</div>
<div class="t c" style="left:562px;width:80px;top:355.40000000000003px;font-size:12.5px;color:rgba(0,0,0,.88);font-weight:400;">18</div>
<div class="t c" style="left:613px;width:80px;top:355.40000000000003px;font-size:12.5px;color:rgba(0,0,0,.88);font-weight:400;">39</div>
<div class="t c" style="left:663.5px;width:80px;top:355.40000000000003px;font-size:12.5px;color:rgba(0,0,0,.88);font-weight:400;">31</div>
<div class="t c" style="left:562px;width:80px;top:380.6px;font-size:12.5px;color:rgba(0,0,0,.88);font-weight:400;">19</div>
<div class="t c" style="left:613px;width:80px;top:380.6px;font-size:12.5px;color:rgba(0,0,0,.88);font-weight:400;">40</div>
<div class="t c" style="left:663.5px;width:80px;top:380.6px;font-size:12.5px;color:rgba(0,0,0,.88);font-weight:400;">32</div>
<div class="t c" style="left:562px;width:80px;top:405.8px;font-size:12.5px;color:rgba(0,0,0,.88);font-weight:400;">20</div>
<div class="t c" style="left:613px;width:80px;top:405.8px;font-size:12.5px;color:rgba(0,0,0,.88);font-weight:400;">41</div>
<div class="t c" style="left:663.5px;width:80px;top:405.8px;font-size:12.5px;color:rgba(0,0,0,.88);font-weight:400;">33</div>
<div class="t c" style="left:562px;width:80px;top:431.0px;font-size:12.5px;color:rgba(0,0,0,.88);font-weight:400;">21</div>
<div class="t c" style="left:613px;width:80px;top:431.0px;font-size:12.5px;color:rgba(0,0,0,.88);font-weight:400;">42</div>
<div class="t c" style="left:663.5px;width:80px;top:431.0px;font-size:12.5px;color:rgba(0,0,0,.88);font-weight:400;">34</div>
<div class="b" style="left:676px;top:472px;width:43px;height:21px;background:#1677ff;border-radius:4px"></div>
<div class="t c" style="left:657.5px;width:80px;top:473.5px;font-size:12.5px;color:#fff;font-weight:400;">确 定</div>
<div class="b" style="left:169px;top:34px;width:258px;height:42px;border:4px solid #ff0d0d;border-radius:2px"></div>
<div class="b" style="left:1271px;top:122px;width:79.5px;height:45px;border:4px solid #ff0d0d;border-radius:2px"></div>
<div class="b" style="left:138.3px;top:164px;width:59.5px;height:35.69999999999999px;border:4px solid #ff0d0d;border-radius:2px"></div>
<div class="b" style="left:290px;top:166px;width:48.75px;height:37.75px;border:4px solid #ff0d0d;border-radius:2px"></div>
<div class="b" style="left:410px;top:164px;width:50.75px;height:38.5px;border:4px solid #ff0d0d;border-radius:2px"></div>
<div class="b" style="left:220px;top:209px;width:62.5px;height:66.5px;border:4px solid #ff0d0d;border-radius:2px"></div>
<div class="b" style="left:616px;top:205px;width:110px;height:35.5px;border:4px solid #ff0d0d;border-radius:2px"></div>
<div class="t red" style="left:435.5px;top:49.5px;height:30px;line-height:30px;font-size:23.5px;font-weight:400;text-shadow:.35px 0 0 #ff0d0d">1</div>
<div class="t red" style="left:1298px;top:89px;height:30px;line-height:30px;font-size:23.5px;font-weight:400;text-shadow:.35px 0 0 #ff0d0d">2</div>
<div class="t red" style="left:159px;top:205px;height:30px;line-height:30px;font-size:23.5px;font-weight:400;text-shadow:.35px 0 0 #ff0d0d">2</div>
<div class="t red" style="left:368.5px;top:148.5px;height:30px;line-height:30px;font-size:23.5px;font-weight:400;text-shadow:.35px 0 0 #ff0d0d">4</div>
<div class="t red" style="left:292px;top:231px;height:30px;line-height:30px;font-size:23.5px;font-weight:400;text-shadow:.35px 0 0 #ff0d0d">3</div>
<div class="t red" style="left:734px;top:201.5px;height:30px;line-height:30px;font-size:23.5px;font-weight:400;text-shadow:.35px 0 0 #ff0d0d">4</div>
<div class="t red" style="left:850px;top:393px;height:30px;line-height:30px;font-size:23.600px;letter-spacing:1.633px;font-weight:500;text-shadow:.4px 0 0 #ff0d0d;text-spacing-trim:space-all">发布时间、创建时间，这两个选择【今日】【昨日】时，时分秒没有显示正确，取的</div>
<div class="t red" style="left:850px;top:421px;height:30px;line-height:30px;font-size:23.600px;letter-spacing:1.633px;font-weight:500;text-shadow:.4px 0 0 #ff0d0d;text-spacing-trim:space-all">是当下的时分秒，时分秒的显示应该是<span class="ql">“</span><span class="hw">0</span><span class="hw">0</span><span class="hw">:</span><span class="hw">0</span><span class="hw">0</span><span class="hw">:</span><span class="hw">0</span><span class="hw">0</span><span class="hw hy">-</span><span class="hw">2</span><span class="hw">3</span><span class="hw">:</span><span class="hw">5</span><span class="hw">9</span><span class="hw">:</span><span class="hw">5</span><span class="hw">9</span><span class="qr">”</span></div>
</body></html>
